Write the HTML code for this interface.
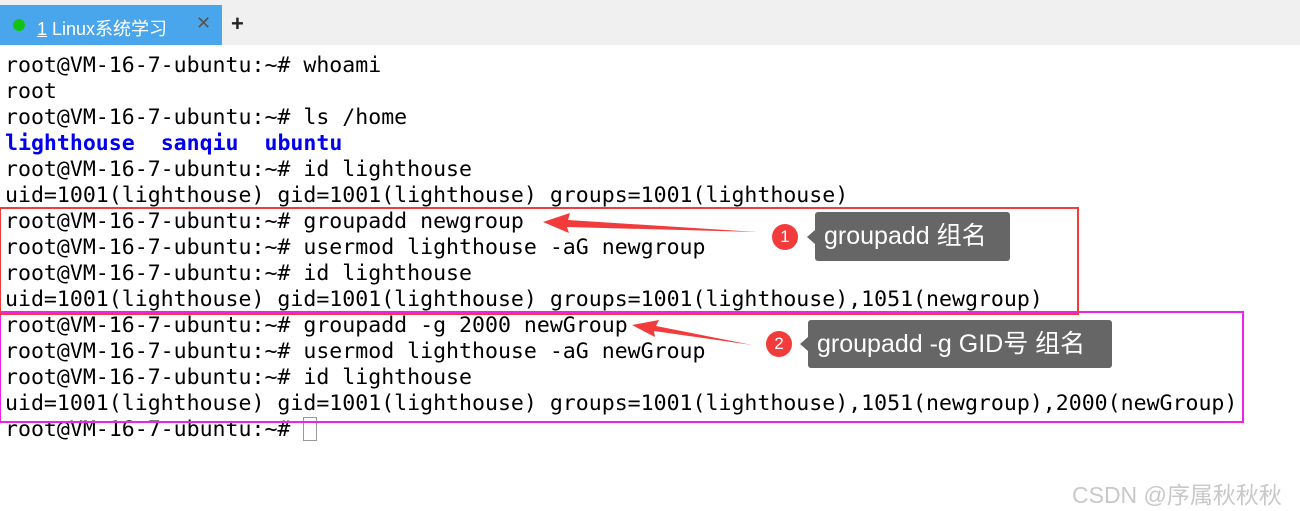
<!DOCTYPE html><html><head><style>
body{margin:0;width:1300px;height:511px;background:#fff;position:relative;overflow:hidden;font-family:"Liberation Sans","Noto Sans CJK SC",sans-serif}
.top{position:absolute;left:0;top:0;width:1300px;height:45px;background:#f0f0f0}
.tab{position:absolute;left:0;top:5px;width:222px;height:40px;background:#4aa6ec;color:#fff;font-size:18px}
.term{position:absolute;left:5px;top:53px;font-family:"DejaVu Sans Mono",monospace;font-size:21.55px;line-height:26px;white-space:pre;color:#000}
.b{color:#0000ee;font-weight:bold}
.box{position:absolute;border:2px solid}
.call{position:absolute;background:#666;color:#fff;font-size:25px;border-radius:3px;padding-left:9px;line-height:48px;white-space:nowrap}
.num{position:absolute;width:26px;height:26px;border-radius:50%;background:#f23b3b;color:#fff;font-size:17px;text-align:center;line-height:26px}
</style></head><body>
<div class="top"></div>
<div class="tab"><span style="position:absolute;left:13px;top:14px;width:12px;height:12px;border-radius:50%;background:#11c411"></span><span style="position:absolute;left:37px;top:10px"><u>1</u> Linux系统学习</span><span style="position:absolute;left:196px;top:8px;color:#555;font-size:18px">✕</span></div>
<div style="position:absolute;left:231px;top:11px;font-size:22px;font-weight:bold;color:#222">+</div>
<div class="term">root@VM-16-7-ubuntu:~# whoami
root
root@VM-16-7-ubuntu:~# ls /home
<span class="b">lighthouse</span>  <span class="b">sanqiu</span>  <span class="b">ubuntu</span>
root@VM-16-7-ubuntu:~# id lighthouse
uid=1001(lighthouse) gid=1001(lighthouse) groups=1001(lighthouse)
root@VM-16-7-ubuntu:~# groupadd newgroup
root@VM-16-7-ubuntu:~# usermod lighthouse -aG newgroup
root@VM-16-7-ubuntu:~# id lighthouse
uid=1001(lighthouse) gid=1001(lighthouse) groups=1001(lighthouse),1051(newgroup)
root@VM-16-7-ubuntu:~# groupadd -g 2000 newGroup
root@VM-16-7-ubuntu:~# usermod lighthouse -aG newGroup
root@VM-16-7-ubuntu:~# id lighthouse
uid=1001(lighthouse) gid=1001(lighthouse) groups=1001(lighthouse),1051(newgroup),2000(newGroup)
root@VM-16-7-ubuntu:~# <span style="display:inline-block;width:12px;height:22px;border:1px solid #999;vertical-align:-5px"></span></div>
<div class="box" style="left:-1px;top:311px;width:1241px;height:108px;border-color:#ee22ee"></div>
<div class="box" style="left:-1px;top:207px;width:1076px;height:104px;border-color:#f23b3b"></div>
<svg style="position:absolute;left:0;top:0" width="1300" height="511">
<polygon points="543,222 570,213 568,220 757,232 567,227 569,233" fill="#f23b3b"/>
<polygon points="632,325 659,320 656,326 752,345 654,331 655,337" fill="#f23b3b"/>
<polygon points="815,230 807,237 815,244" fill="#666"/>
<polygon points="808,337 800,344 808,351" fill="#666"/>
</svg>
<div class="num" style="left:772px;top:224px">1</div>
<div class="call" style="left:815px;top:212px;width:186px;height:49px">groupadd 组名</div>
<div class="num" style="left:766px;top:331px">2</div>
<div class="call" style="left:808px;top:320px;width:295px;height:48px">groupadd -g GID号 组名</div>
<div style="position:absolute;left:1072px;top:476px;font-size:23px;color:#c8c8c8">CSDN @序属秋秋秋</div>
</body></html>
